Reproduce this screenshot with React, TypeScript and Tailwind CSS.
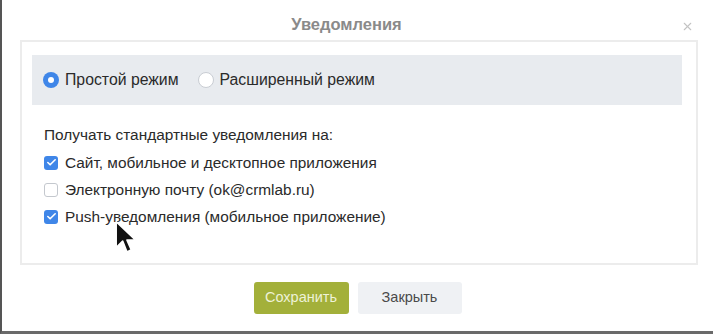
import { Check, X } from "lucide-react";

const font = { fontFamily: '"Liberation Sans", Arial, sans-serif' };

function Radio({ checked, label }: { checked?: boolean; label: string }) {
  return (
    <label className="flex items-center gap-[6px]">
      {checked ? (
        <span className="w-4 h-4 rounded-full bg-[#3f86e8] flex items-center justify-center">
          <span className="w-[6px] h-[6px] rounded-full bg-white" />
        </span>
      ) : (
        <span className="w-4 h-4 rounded-full bg-white border border-[#c9cdd3]" />
      )}
      <span>{label}</span>
    </label>
  );
}

function Checkbox({ checked, label }: { checked?: boolean; label: string }) {
  return (
    <label className="flex items-center gap-[7px] h-[27px]">
      {checked ? (
        <span className="w-[14px] h-[14px] rounded-[3px] bg-[#3f86e8] flex items-center justify-center">
          <Check className="w-[11px] h-[11px] text-white" strokeWidth={3.5} />
        </span>
      ) : (
        <span className="w-[14px] h-[14px] rounded-[3px] bg-white border border-[#c4c8ce]" />
      )}
      <span>{label}</span>
    </label>
  );
}

export default function App() {
  return (
    <div
      style={font}
      className="w-[713px] h-[334px] bg-white border-l-2 border-l-[#555] border-b-[3px] border-b-[#6a6a6a] overflow-hidden relative text-[#2a2a2a]"
    >
      <div className="h-[40px] flex items-center justify-center relative pt-[14px] pb-[5px] pr-[22px]">
        <h2 className="text-[16.5px] font-bold text-[#8a8a8a]">Уведомления</h2>
        <X className="absolute right-[19px] top-[20px] w-[13px] h-[13px] text-[#c3c3c3]" strokeWidth={2} />
      </div>
      <div className="ml-[18px] mr-[15px] h-[225px] border-2 border-[#ececec] pl-[10px] pr-[14px] pt-[13px]">
        <div className="h-[50px] bg-[#e8ebef] flex items-center gap-[19px] px-[11px] text-[15.8px]">
          <Radio checked label="Простой режим" />
          <Radio label="Расширенный режим" />
        </div>
        <div className="pl-[12px] pt-[18px] text-[15.4px]">
          <p className="mb-[3px]">Получать стандартные уведомления на:</p>
          <Checkbox checked label="Сайт, мобильное и десктопное приложения" />
          <Checkbox label="Электронную почту (ok@crmlab.ru)" />
          <Checkbox checked label="Push-уведомления (мобильное приложение)" />
        </div>
      </div>
      <div className="flex justify-center gap-[9px] pt-[17px] text-[14.5px]">
        <button className="w-[95px] h-[32px] rounded-[3px] bg-[#a3b03a] text-[#eef2d8]">Сохранить</button>
        <button className="w-[104px] h-[32px] rounded-[3px] bg-[#eff1f4] text-[#4a4a4a]">Закрыть</button>
      </div>
      <svg className="absolute left-[112px] top-[219px]" width="26" height="40" viewBox="0 0 24 36">
        <path d="M2 2 L2 26 L8 20 L12 30 L16 28 L12 19 L20 19 Z" fill="#111" stroke="#fff" strokeWidth="1.5" strokeLinejoin="round" />
      </svg>
    </div>
  );
}
